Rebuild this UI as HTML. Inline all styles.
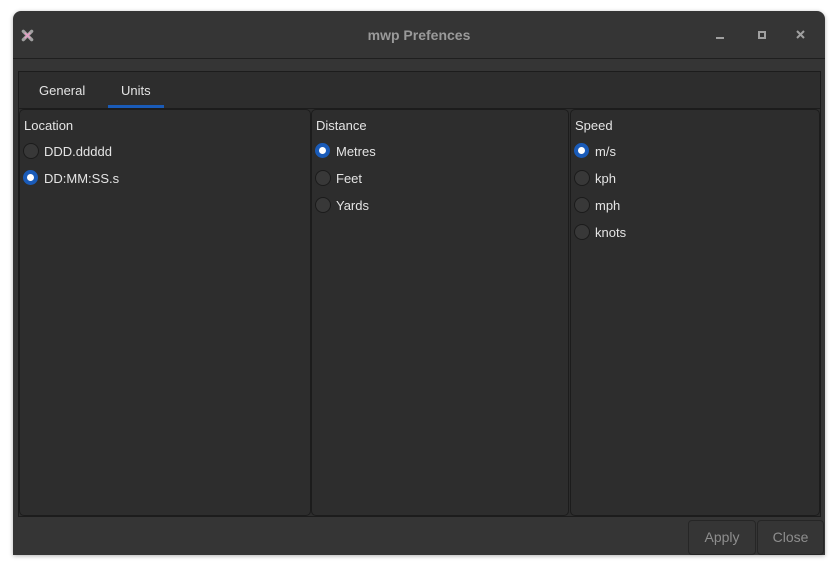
<!DOCTYPE html><html><head><style>
body{margin:0;width:838px;height:571px;background:#fff;position:relative;font-family:"Liberation Sans",sans-serif;overflow:hidden}
.win{position:absolute;left:13px;top:11px;width:812px;height:544px;background:#353535;border-radius:8px 8px 0 0;box-shadow:0 1px 4px rgba(0,0,0,.3)}
.tb{position:absolute;left:0;top:0;width:812px;height:47px;border-bottom:1px solid #1f1f1f;}
.title{position:absolute;left:0;right:0;top:16px;text-align:center;color:#9a9a9a;font-weight:bold;font-size:14px}
.nb{position:absolute;left:5px;top:60px;width:801px;height:444px;background:#2d2d2d;border:1px solid #1c1c1c}
.tab{position:absolute;top:11px;font-size:13px;color:#e4e4e4}
.pan{position:absolute;top:37px;height:405px;background:#2d2d2d;border:1px solid #1c1c1c;border-radius:5px}
.lbl{position:absolute;left:4px;top:8px;font-size:13px;color:#e4e4e4}
.r{position:absolute;left:4px;font-size:13px;color:#e4e4e4;padding-left:20px;line-height:16px;margin-top:1px}
.r:before{content:"";position:absolute;left:-1px;top:-1px;width:14px;height:14px;border-radius:50%;border:1px solid #1b1b1b;background:#383838}
.r.on:before{background:#fff;border:4px solid #1a5bb8;width:7px;height:7px}
.btn{position:absolute;top:509px;height:33px;border:1px solid #262626;border-radius:4px;background:#353535;color:#8e8e8e;font-size:14px;text-align:center;line-height:33px}
</style></head><body>
<div class="win">
<div class="tb">
<svg style="position:absolute;left:8px;top:18px" width="13" height="13" viewBox="0 0 14 14"><path d="M2.5 2.5L11.5 11.5M11.5 2.5L2.5 11.5" stroke="#a0a0a0" stroke-width="3.5" stroke-linecap="round"/><path d="M4 4L10 10M10 4L4 10" stroke="#e8a0c8" stroke-width="1.5"/></svg>
<div class="title">mwp Prefences</div>
<div style="position:absolute;left:703px;top:26px;width:8px;height:2px;background:#a0a0a0"></div>
<div style="position:absolute;left:745px;top:20px;width:4px;height:4px;border:2px solid #a0a0a0"></div>
<svg style="position:absolute;left:783px;top:19px" width="9" height="9"><path d="M1 1L8 8M8 1L1 8" stroke="#a0a0a0" stroke-width="2"/></svg>
</div>
<div class="nb">
<div class="tab" style="left:20px">General</div>
<div class="tab" style="left:102px">Units</div>
<div style="position:absolute;left:89px;top:33px;width:56px;height:3px;background:#1a5bb8"></div>
<div style="position:absolute;left:0;top:36px;width:801px;height:1px;background:#1c1c1c"></div>
<div class="pan" style="left:0;width:290px"><div class="lbl">Location</div>
<div class="r" style="top:33px">DDD.ddddd</div><div class="r on" style="top:60px">DD:MM:SS.s</div></div>
<div class="pan" style="left:292px;width:256px"><div class="lbl">Distance</div>
<div class="r on" style="top:33px">Metres</div><div class="r" style="top:60px">Feet</div><div class="r" style="top:87px">Yards</div></div>
<div class="pan" style="left:551px;width:248px"><div class="lbl">Speed</div>
<div class="r on" style="top:33px">m/s</div><div class="r" style="top:60px">kph</div><div class="r" style="top:87px">mph</div><div class="r" style="top:114px">knots</div></div>
</div>
<div class="btn" style="left:675px;width:66px">Apply</div>
<div class="btn" style="left:744px;width:65px">Close</div>
</div>
</body></html>
